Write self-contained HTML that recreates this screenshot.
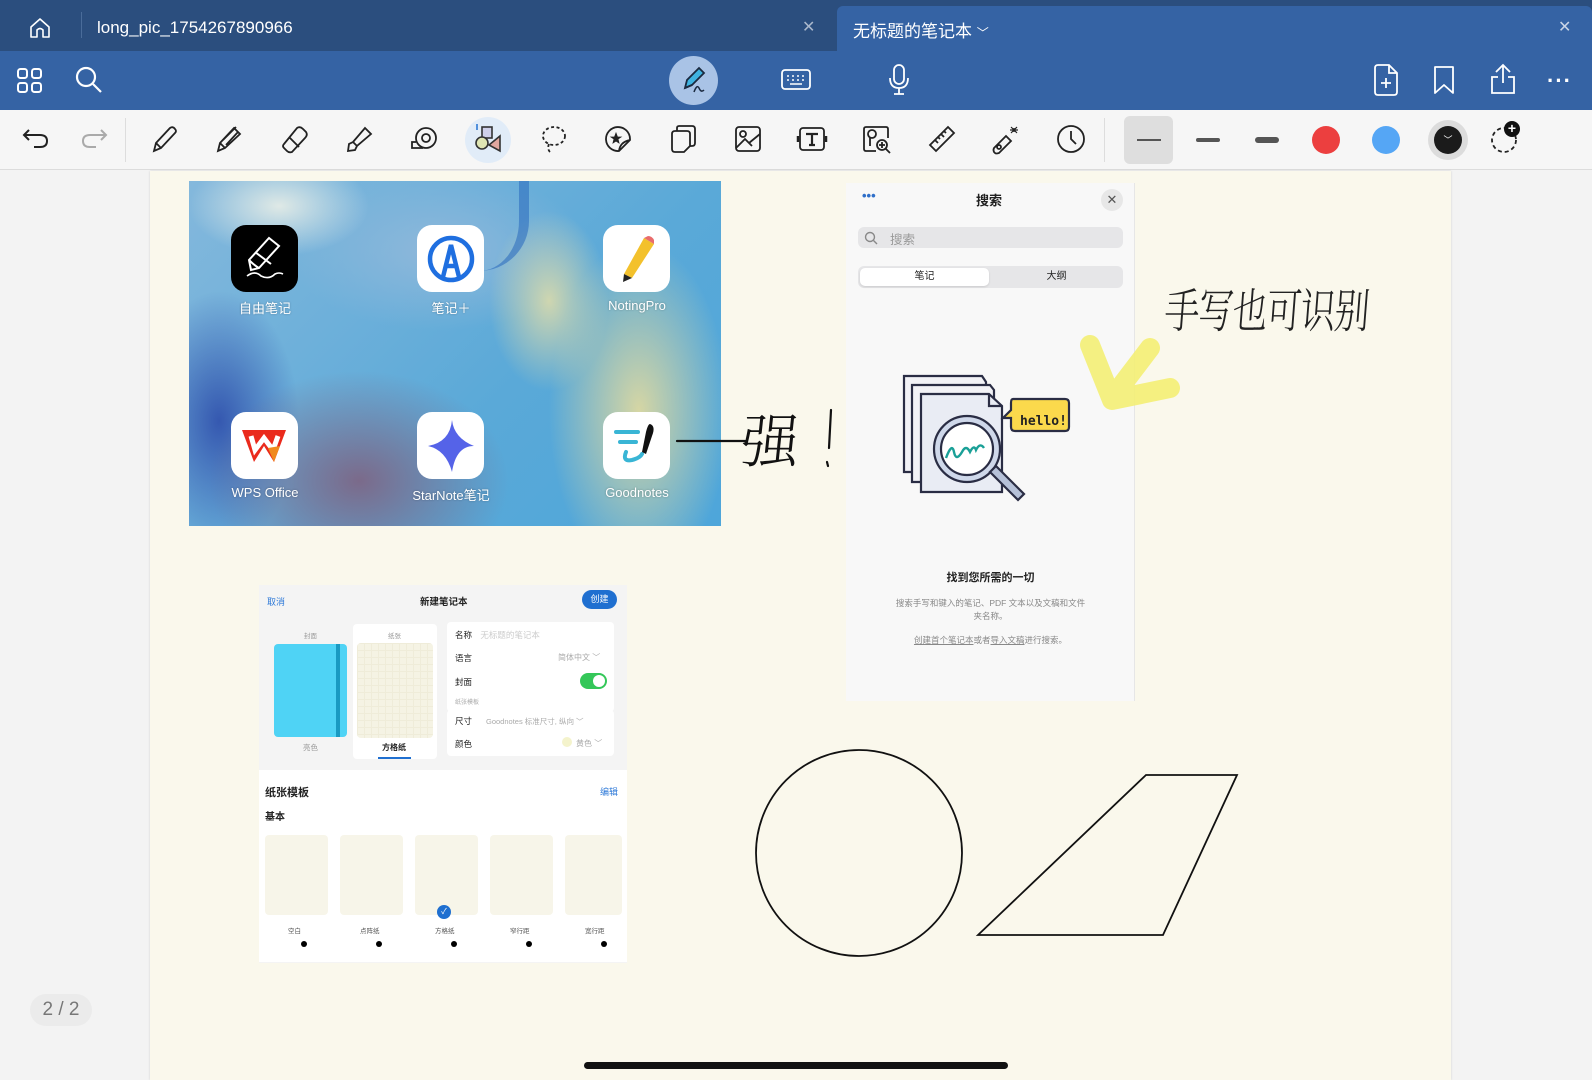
<!DOCTYPE html>
<html><head><meta charset="utf-8">
<style>
*{margin:0;padding:0;box-sizing:border-box}
body{width:1592px;height:1080px;overflow:hidden;background:#f3f3f3;font-family:"Liberation Sans","Noto Sans CJK SC",sans-serif;position:relative}
.a{position:absolute}
svg{overflow:visible}
.tb{position:absolute;top:124px;width:30px;height:30px}
.lbl{position:absolute;color:#fff;font-size:13px;text-align:center;width:110px;text-shadow:0 0 2px rgba(0,0,0,.3)}
.app{position:absolute;width:67px;height:67px;border-radius:15px;background:#fff}
</style></head><body>
<!-- tab bar -->
<div class="a" style="left:0;top:0;width:1592px;height:51px;background:#2b4e7e"></div>
<div class="a" style="left:837px;top:6px;width:755px;height:45px;background:#3563a4;border-radius:6px 6px 0 0"></div>
<svg class="a" style="left:28px;top:16px" width="24" height="24" viewBox="0 0 24 24" fill="none" stroke="#fff" stroke-width="1.6"><path d="M3 11 L12 3 L21 11 V21 H15 V14 Q12 11 9 14 V21 H3 Z" stroke-linejoin="round"/></svg>
<div class="a" style="left:81px;top:12px;width:1px;height:26px;background:#4a6c9a"></div>
<div class="a" style="left:97px;top:18px;color:#fff;font-size:17px">long_pic_1754267890966</div>
<div class="a" style="left:802px;top:17px;color:#aab8cc;font-size:16px">✕</div>
<div class="a" style="left:853px;top:17px;color:#fff;font-size:17px">无标题的笔记本 <span style="font-size:12px">﹀</span></div>
<div class="a" style="left:1558px;top:17px;color:#c8d4e6;font-size:16px">✕</div>
<!-- nav bar -->
<div class="a" style="left:0;top:51px;width:1592px;height:59px;background:#3563a4"></div>
<svg class="a" style="left:17px;top:68px" width="26" height="26" viewBox="0 0 26 26" fill="none" stroke="#fff" stroke-width="2"><rect x="1" y="1" width="9" height="9" rx="2.5"/><rect x="15" y="1" width="9" height="9" rx="2.5"/><rect x="1" y="15" width="9" height="9" rx="2.5"/><rect x="15" y="15" width="9" height="9" rx="2.5"/></svg>
<svg class="a" style="left:75px;top:66px" width="28" height="28" viewBox="0 0 28 28" fill="none" stroke="#fff" stroke-width="2.2"><circle cx="11" cy="11" r="9"/><path d="M18 18 L26 26"/></svg>
<div class="a" style="left:669px;top:56px;width:49px;height:49px;border-radius:50%;background:#a9c3e6"></div>
<svg class="a" style="left:679px;top:66px" width="30" height="30" viewBox="0 0 30 30" fill="none" stroke="#1b2a40" stroke-width="1.8"><path d="M6 22 L8 14 L20 2 L25 7 L13 19 Z" fill="#3fb3e0"/><path d="M6 22 L13 19"/><path d="M15 26 Q18 18 20 22 Q22 27 25 24" stroke-width="1.5"/></svg>
<svg class="a" style="left:781px;top:67px" width="30" height="26" viewBox="0 0 30 26" fill="none" stroke="#fff" stroke-width="1.8"><rect x="1" y="3" width="28" height="19" rx="3"/><path d="M6 9h2M11 9h2M16 9h2M21 9h2M6 13h2M11 13h2M16 13h2M21 13h2M9 17h12" stroke-width="1.6"/></svg>
<svg class="a" style="left:887px;top:64px" width="24" height="32" viewBox="0 0 24 32" fill="none" stroke="#fff" stroke-width="1.8"><rect x="7" y="1" width="10" height="19" rx="5"/><path d="M3 14 Q3 24 12 24 Q21 24 21 14 M12 24 V30 M7 30 H17"/></svg>
<svg class="a" style="left:1372px;top:64px" width="28" height="32" viewBox="0 0 28 32" fill="none" stroke="#fff" stroke-width="1.8"><path d="M3 4 Q3 1 6 1 H17 L25 9 V28 Q25 31 22 31 H6 Q3 31 3 28 Z M17 1 V9 H25"/><path d="M14 14 V24 M9 19 H19"/></svg>
<svg class="a" style="left:1433px;top:65px" width="22" height="30" viewBox="0 0 22 30" fill="none" stroke="#fff" stroke-width="1.8"><path d="M2 2 H20 V28 L11 20 L2 28 Z" stroke-linejoin="round"/></svg>
<svg class="a" style="left:1489px;top:63px" width="28" height="32" viewBox="0 0 28 32" fill="none" stroke="#fff" stroke-width="1.8"><path d="M14 2 V20 M7 9 L14 2 L21 9 M9 14 H3 V30 H25 V14 H19"/></svg>
<div class="a" style="left:1547px;top:68px;color:#fff;font-size:22px;letter-spacing:1px;font-weight:bold">···</div>
<!-- toolbar -->
<div class="a" style="left:0;top:110px;width:1592px;height:60px;background:#f6f6f6;border-bottom:1px solid #dcdcdc"></div>
<div class="a" style="left:125px;top:118px;width:1px;height:44px;background:#ddd"></div>
<div class="a" style="left:1104px;top:118px;width:1px;height:44px;background:#ddd"></div>
<svg class="tb" style="left:21px" viewBox="0 0 30 30" fill="none" stroke="#222" stroke-width="2"><path d="M8 6 L3 11 L8 16 M3 11 H19 Q26 11 26 17 Q26 23 19 23 H13"/></svg>
<svg class="tb" style="left:79px" viewBox="0 0 30 30" fill="none" stroke="#aaa" stroke-width="2"><path d="M22 6 L27 11 L22 16 M27 11 H11 Q4 11 4 17 Q4 23 11 23 H17"/></svg>
<svg class="tb" style="left:150px" viewBox="0 0 30 30" fill="none" stroke="#222" stroke-width="1.8"><path d="M4 27 L6 19 L20 4 Q23 2 25 5 Q27 7 25 9 L11 24 Z M6 19 L11 24"/></svg>
<svg class="tb" style="left:214px" viewBox="0 0 30 30" fill="none" stroke="#222" stroke-width="1.8"><path d="M4 27 L6 19 L20 4 L26 10 L11 24 Z M6 19 L11 24 M9 16 L22 3 M12 21 L24 8"/></svg>
<svg class="tb" style="left:279px" viewBox="0 0 30 30" fill="none" stroke="#222" stroke-width="1.8"><path d="M5 20 L18 4 Q21 2 24 5 L27 8 Q29 11 26 14 L13 28 Q10 29 8 27 L5 24 Q3 22 5 20 Z M11 14 L20 23"/></svg>
<svg class="tb" style="left:344px" viewBox="0 0 30 30" fill="none" stroke="#222" stroke-width="1.8"><path d="M4 27 L5 20 L9 18 L21 4 L27 10 L13 22 L11 26 Z M9 18 L13 22"/></svg>
<svg class="tb" style="left:409px" viewBox="0 0 30 30" fill="none" stroke="#222" stroke-width="1.8"><circle cx="17" cy="14" r="10"/><circle cx="17" cy="14" r="4"/><path d="M7 18 H3 V24 H14"/></svg>
<div class="a" style="left:465px;top:117px;width:46px;height:46px;border-radius:50%;background:#e1ecf8"></div>
<svg class="tb" style="left:473px" viewBox="0 0 30 30" fill="none" stroke="#333" stroke-width="1.6"><rect x="9" y="3" width="10" height="11" fill="#cfd0ea"/><circle cx="9" cy="19" r="6" fill="#dfe6b4"/><path d="M27 12 L27 27 L16 21 Z" fill="#e0a7a0"/><path d="M4 0 L4 6" stroke="#2d7ad6"/></svg>
<svg class="tb" style="left:539px" viewBox="0 0 30 30" fill="none" stroke="#222" stroke-width="1.8" stroke-dasharray="3 2.5"><ellipse cx="15" cy="12" rx="11" ry="9"/><path d="M10 20 Q8 25 11 28"/></svg>
<svg class="tb" style="left:603px" viewBox="0 0 30 30" fill="none" stroke="#222" stroke-width="1.8"><path d="M27 15 A12 12 0 1 0 16 27 L27 16 Z M16 27 Q17 18 27 16"/><path d="M13 9 L14.5 13 L18 13 L15 15 L16 19 L13 17 L10 19 L11 15 L8 13 L11.5 13 Z" fill="#222" stroke-width="0.8"/></svg>
<svg class="tb" style="left:668px" viewBox="0 0 30 30" fill="none" stroke="#222" stroke-width="1.8"><path d="M9 7 V4 Q9 2 11 2 H24 Q27 2 27 5 V19 Q27 22 24 22 H22"/><path d="M4 10 Q4 7 7 7 H19 Q22 7 22 10 V22 L16 28 H7 Q4 28 4 25 Z"/></svg>
<svg class="tb" style="left:733px" viewBox="0 0 30 30" fill="none" stroke="#222" stroke-width="1.8"><rect x="3" y="3" width="24" height="24" rx="3"/><circle cx="10" cy="10" r="3"/><path d="M3 24 L12 15 L19 22 M16 19 L27 10"/></svg>
<svg class="tb" style="left:797px" viewBox="0 0 30 30" fill="none" stroke="#222" stroke-width="1.8"><rect x="3" y="4" width="24" height="22" rx="3"/><path d="M9 10 H21 M15 10 V21 M12 21 H18" stroke-width="2.2"/><path d="M1 12 V18 M29 12 V18" stroke-width="2.5"/></svg>
<svg class="tb" style="left:862px" viewBox="0 0 30 30" fill="none" stroke="#222" stroke-width="1.8"><path d="M14 27 H4 Q2 27 2 25 V5 Q2 3 4 3 H24 Q26 3 26 5 V14"/><circle cx="10" cy="10" r="4"/><path d="M8 14 L8 22"/><circle cx="20" cy="21" r="5"/><path d="M24 25 L28 29 M20 18 V24 M17 21 H23"/></svg>
<svg class="tb" style="left:927px" viewBox="0 0 30 30" fill="none" stroke="#222" stroke-width="1.8"><path d="M3 21 L21 3 L27 9 L9 27 Z M8 16 L11 19 M11 13 L13 15 M14 10 L17 13 M17 7 L19 9"/></svg>
<svg class="tb" style="left:991px" viewBox="0 0 30 30" fill="none" stroke="#222" stroke-width="1.8"><path d="M3 24 L15 12 L20 17 L8 29 Q5 30 4 29 L3 28 Q2 26 3 24 Z"/><circle cx="8" cy="23" r="2"/><path d="M23 4 V8 M19 6 H27 M20 3 L26 9 M26 3 L20 9" stroke-width="1.2"/></svg>
<svg class="tb" style="left:1056px" viewBox="0 0 30 30" fill="none" stroke="#222" stroke-width="1.8"><circle cx="15" cy="15" r="13"/><path d="M15 7 V15 L20 20"/></svg>
<div class="a" style="left:1124px;top:116px;width:49px;height:48px;border-radius:6px;background:#dedede"></div>
<div class="a" style="left:1137px;top:139px;width:24px;height:1.5px;background:#555"></div>
<div class="a" style="left:1196px;top:138px;width:24px;height:3.5px;background:#555;border-radius:2px"></div>
<div class="a" style="left:1255px;top:137px;width:24px;height:5.5px;background:#555;border-radius:3px"></div>
<div class="a" style="left:1312px;top:126px;width:28px;height:28px;border-radius:50%;background:#ec3f3f"></div>
<div class="a" style="left:1372px;top:126px;width:28px;height:28px;border-radius:50%;background:#55a6f5"></div>
<div class="a" style="left:1428px;top:120px;width:40px;height:40px;border-radius:50%;background:#dcdcdc"></div>
<div class="a" style="left:1434px;top:126px;width:28px;height:28px;border-radius:50%;background:#1b1b1b;color:#fff;font-size:9px;text-align:center;line-height:28px">﹀</div>
<svg class="tb" style="left:1489px" viewBox="0 0 30 30" fill="none" stroke="#222" stroke-width="1.8" stroke-dasharray="4 3"><circle cx="15" cy="16" r="12"/></svg>
<div class="a" style="left:1504px;top:121px;width:16px;height:16px;border-radius:50%;background:#111;color:#fff;font-size:14px;line-height:15px;text-align:center;font-weight:bold">+</div>
<!-- page -->
<div class="a" style="left:150px;top:171px;width:1301px;height:909px;background:#faf8ec;box-shadow:0 0 2px rgba(0,0,0,.15)"></div>
<div class="a" style="left:30px;top:994px;width:62px;height:32px;border-radius:16px;background:#ebebeb;color:#777;font-size:19px;text-align:center;line-height:32px">2 / 2</div>
<div class="a" style="left:584px;top:1062px;width:424px;height:7px;border-radius:4px;background:#111"></div>
<!-- photo -->
<div class="a" style="left:189px;top:181px;width:532px;height:345px;overflow:hidden;background:
radial-gradient(ellipse 90px 50px at 90px 25px,#dfe9e6 0%,rgba(223,233,230,0) 100%),
radial-gradient(ellipse 90px 170px at 450px 230px,#d6d6a4 0%,rgba(214,214,164,0) 100%),
radial-gradient(ellipse 60px 90px at 360px 120px,#cfd6b0 0%,rgba(207,214,176,0) 100%),
radial-gradient(ellipse 150px 80px at 250px 70px,#8fb8da 0%,rgba(143,184,218,0) 100%),
radial-gradient(ellipse 150px 110px at 170px 300px,#7b6a8a 0%,rgba(123,106,138,0) 100%),
radial-gradient(ellipse 80px 130px at 30px 240px,#3558b0 0%,rgba(53,88,176,0) 100%),
linear-gradient(135deg,#84b8dc,#5aa9d8 60%,#4ea6da)">
<div class="a" style="left:290px;top:-10px;width:50px;height:100px;border-radius:0 0 50px 0;border-right:10px solid #2f6fc0;opacity:.6"></div>
</div>
<div class="app" style="left:231px;top:225px;background:#000"></div>
<svg class="a" style="left:241px;top:232px" width="48" height="52" viewBox="0 0 48 52" fill="none" stroke="#fff" stroke-width="2"><path d="M10 38 L8 28 L28 6 L38 14 L18 36 Z M14 20 L30 32 M8 28 Q14 34 18 36"/><path d="M6 44 Q14 38 20 44 Q28 48 34 42 Q38 40 42 42" stroke-width="1.6"/></svg>
<div class="app" style="left:417px;top:225px"></div>
<svg class="a" style="left:425px;top:233px" width="52" height="52" viewBox="0 0 52 52" fill="none" stroke="#1f6fe0" stroke-width="4.5"><circle cx="26" cy="26" r="21"/><path d="M18 44 L26 12 L34 44 M21 33 H31"/></svg>
<div class="app" style="left:603px;top:225px"></div>
<svg class="a" style="left:610px;top:232px" width="54" height="54" viewBox="0 0 54 54"><path d="M34 6 L44 12 L22 46 L14 42 Z" fill="#f3c12c"/><path d="M34 6 L38 4 Q42 4 44 8 L44 12 Z" fill="#e96c6c"/><path d="M14 42 L22 46 L13 50 Z" fill="#222"/></svg>
<div class="app" style="left:231px;top:412px"></div>
<svg class="a" style="left:238px;top:420px" width="54" height="52" viewBox="0 0 54 52"><path d="M4 10 H48 L36 42 L26 26 L16 42 Z" fill="#ea2a1c"/><path d="M13 16 L17 30 L26 18 L35 30 L40 16" fill="none" stroke="#fff" stroke-width="5"/><path d="M30 28 L36 42 L42 26" fill="#f08a1e"/></svg>
<div class="app" style="left:417px;top:412px"></div>
<svg class="a" style="left:422px;top:416px" width="58" height="58" viewBox="0 0 58 58"><path d="M30 4 Q32 22 52 30 Q34 30 30 56 Q24 34 6 30 Q28 26 30 4 Z" fill="#5563e8"/></svg>
<div class="app" style="left:603px;top:412px"></div>
<svg class="a" style="left:610px;top:420px" width="54" height="52" viewBox="0 0 54 52" fill="none"><path d="M6 12 H28 M10 22 H26 M16 32 Q12 42 22 40 Q30 38 32 34" stroke="#39b5d5" stroke-width="4" stroke-linecap="round"/><path d="M40 4 Q46 6 42 16 L36 34 L32 32 L36 12 Q38 4 40 4 Z" fill="#111"/></svg>
<div class="lbl" style="left:210px;top:298px">自由笔记</div>
<div class="lbl" style="left:396px;top:298px">笔记＋</div>
<div class="lbl" style="left:582px;top:298px">NotingPro</div>
<div class="lbl" style="left:210px;top:485px">WPS Office</div>
<div class="lbl" style="left:396px;top:485px">StarNote笔记</div>
<div class="lbl" style="left:582px;top:485px">Goodnotes</div>
<!-- handwriting 强 -->
<svg class="a" style="left:675px;top:400px" width="170" height="80" viewBox="0 0 170 80" fill="none" stroke="#111" stroke-width="2.2" stroke-linecap="round"><path d="M2 41 H70"/><path d="M156 10 L154 48 M152 62 L153 66"/></svg>
<div class="a" style="left:742px;top:402px;font-family:'Noto Serif CJK SC',serif;font-weight:300;font-size:58px;line-height:70px;color:#111;transform:skewX(-6deg)">强</div>
<!-- search panel -->
<div class="a" style="left:846px;top:183px;width:289px;height:518px;background:#f8f8f8;border-right:1px solid #e6e6e6"></div>
<div class="a" style="left:862px;top:188px;color:#2f6fc9;font-size:13px;font-weight:bold">•••</div>
<div class="a" style="left:976px;top:190px;font-size:13px;font-weight:bold;color:#222">搜索</div>
<div class="a" style="left:1101px;top:189px;width:22px;height:22px;border-radius:50%;background:#e7e7e7;color:#555;font-size:13px;text-align:center;line-height:22px">✕</div>
<div class="a" style="left:858px;top:227px;width:265px;height:21px;border-radius:6px;background:#e6e6e8"></div>
<svg class="a" style="left:864px;top:231px" width="14" height="14" viewBox="0 0 14 14" fill="none" stroke="#888" stroke-width="1.4"><circle cx="6" cy="6" r="4.5"/><path d="M9.5 9.5 L13 13"/></svg>
<div class="a" style="left:890px;top:229px;font-size:12.5px;color:#999">搜索</div>
<div class="a" style="left:858px;top:266px;width:265px;height:22px;border-radius:6px;background:#e6e6e8"></div>
<div class="a" style="left:860px;top:268px;width:129px;height:18px;border-radius:5px;background:#fff;box-shadow:0 1px 2px rgba(0,0,0,.12);font-size:10px;text-align:center;line-height:18px;color:#222">笔记</div>
<div class="a" style="left:992px;top:268px;width:129px;height:18px;font-size:10px;text-align:center;line-height:18px;color:#222">大纲</div>
<svg class="a" style="left:900px;top:372px" width="180" height="160" viewBox="0 0 180 160" fill="none" stroke="#2a2d44" stroke-width="2.2"><path d="M4 4 H82 L86 10 V100 H4 Z" fill="#f2f2f6"/><path d="M12 13 H90 L94 18 V110 H12 Z" fill="#f2f2f6"/><path d="M21 22 H89 L102 34 V120 H21 Z" fill="#e9ecf4"/><path d="M89 22 V34 H102"/><circle cx="67" cy="77" r="33" fill="#cfd8ea"/><circle cx="67" cy="77" r="26" fill="#fff"/><path d="M90 100 L118 128 L124 122 L96 94 Z" fill="#b6c1d8"/><path d="M46 86 Q52 70 54 80 Q56 90 62 80 Q66 72 70 80 Q74 72 76 78 Q80 70 84 76" stroke="#1aa097" stroke-width="2.4"/><path d="M113 27 H165 Q169 27 169 31 V55 Q169 59 165 59 H115 Q111 59 111 55 V46 L103 46 L111 38 V31 Q111 27 113 27 Z" fill="#fbd94c"/></svg>
<div class="a" style="left:1020px;top:414px;font-family:'DejaVu Sans Mono',monospace;font-weight:bold;font-size:13px;color:#222">hello!</div>
<div class="a" style="left:846px;top:569px;width:289px;text-align:center;font-size:11px;font-weight:bold;color:#222">找到您所需的一切</div>
<div class="a" style="left:893px;top:597px;width:195px;text-align:center;font-size:8.5px;color:#888;line-height:13px">搜索手写和键入的笔记、PDF 文本以及文稿和文件夹名称。</div>
<div class="a" style="left:846px;top:634px;width:289px;text-align:center;font-size:8.5px;color:#888"><u>创建首个笔记本</u>或者<u>导入文稿</u>进行搜索。</div>
<!-- yellow arrow -->
<svg class="a" style="left:1080px;top:330px" width="110" height="90" viewBox="0 0 110 90" fill="none" stroke="#f3ee6d" stroke-opacity=".85" stroke-width="20" stroke-linecap="round" stroke-linejoin="round"><path d="M10 15 L32 70 L90 58 M32 68 L70 18"/></svg>
<!-- handwriting 手写也可识别 -->
<div class="a" style="left:1168px;top:268px;font-family:'Noto Serif CJK SC',serif;font-size:35px;line-height:60px;color:#222;letter-spacing:-1px;transform:scaleY(1.35) skewX(-6deg);transform-origin:left top;font-weight:300">手写也可识别</div>
<!-- dialog -->
<div class="a" style="left:259px;top:585px;width:368px;height:378px;background:#f4f4f4"></div>
<div class="a" style="left:267px;top:595px;font-size:9px;color:#2f7ad8">取消</div>
<div class="a" style="left:420px;top:594px;font-size:9.5px;font-weight:bold;color:#222">新建笔记本</div>
<div class="a" style="left:582px;top:590px;width:35px;height:19px;border-radius:10px;background:#1f6fd0;color:#fff;font-size:9px;text-align:center;line-height:19px">创建</div>
<div class="a" style="left:304px;top:630px;font-size:6.5px;color:#999">封面</div>
<div class="a" style="left:274px;top:644px;width:73px;height:93px;border-radius:4px;background:#4fd3f5"></div>
<div class="a" style="left:336px;top:644px;width:4px;height:93px;background:#1a9ac2"></div>
<div class="a" style="left:303px;top:742px;font-size:7.5px;color:#999">亮色</div>
<div class="a" style="left:353px;top:624px;width:84px;height:135px;background:#fff;border-radius:4px"></div>
<div class="a" style="left:388px;top:630px;font-size:6.5px;color:#999">纸张</div>
<div class="a" style="left:357px;top:643px;width:76px;height:95px;border-radius:4px;background:#f5f3e4;background-image:linear-gradient(#efecd9 1px,transparent 1px),linear-gradient(90deg,#efecd9 1px,transparent 1px);background-size:7px 7px"></div>
<div class="a" style="left:382px;top:742px;font-size:8px;font-weight:bold;color:#222">方格纸</div>
<div class="a" style="left:378px;top:757px;width:33px;height:2px;background:#1f6fd0"></div>
<div class="a" style="left:447px;top:622px;width:167px;height:90px;background:#fff;border-radius:4px"></div>
<div class="a" style="left:455px;top:629px;font-size:8.5px;color:#222">名称 <span style="color:#ccc;margin-left:6px">无标题的笔记本</span></div>
<div class="a" style="left:455px;top:652px;font-size:8.5px;color:#222">语言</div>
<div class="a" style="left:558px;top:652px;font-size:8px;color:#aaa">简体中文 ﹀</div>
<div class="a" style="left:455px;top:676px;font-size:8.5px;color:#222">封面</div>
<div class="a" style="left:580px;top:673px;width:27px;height:16px;border-radius:8px;background:#34c759"></div>
<div class="a" style="left:593px;top:675px;width:12px;height:12px;border-radius:50%;background:#fff"></div>
<div class="a" style="left:455px;top:697px;font-size:6px;color:#aaa">纸张模板</div>
<div class="a" style="left:447px;top:710px;width:167px;height:46px;background:#fff;border-radius:4px"></div>
<div class="a" style="left:455px;top:715px;font-size:8.5px;color:#222">尺寸</div>
<div class="a" style="left:486px;top:716px;font-size:7.5px;color:#aaa">Goodnotes 标准尺寸, 纵向 ﹀</div>
<div class="a" style="left:455px;top:738px;font-size:8.5px;color:#222">颜色</div>
<div class="a" style="left:562px;top:737px;width:10px;height:10px;border-radius:50%;background:#f4f3cc"></div>
<div class="a" style="left:576px;top:738px;font-size:8px;color:#aaa">黄色 ﹀</div>
<div class="a" style="left:259px;top:770px;width:368px;height:192px;background:#fff"></div>
<div class="a" style="left:265px;top:784px;font-size:11px;font-weight:bold;color:#222">纸张模板</div>
<div class="a" style="left:600px;top:785px;font-size:9px;color:#2f7ad8">编辑</div>
<div class="a" style="left:265px;top:808px;font-size:10px;font-weight:bold;color:#222">基本</div>
<div class="a" style="left:265px;top:835px;width:63px;height:80px;border-radius:4px;background:#f7f5e9"></div>
<div class="a" style="left:340px;top:835px;width:63px;height:80px;border-radius:4px;background:#f7f5e9"></div>
<div class="a" style="left:415px;top:835px;width:63px;height:80px;border-radius:4px;background:#f7f5e9"></div>
<div class="a" style="left:490px;top:835px;width:63px;height:80px;border-radius:4px;background:#f7f5e9"></div>
<div class="a" style="left:565px;top:835px;width:57px;height:80px;border-radius:4px;background:#f7f5e9"></div>
<div class="a" style="left:437px;top:905px;width:14px;height:14px;border-radius:50%;background:#1f6fd0;color:#fff;font-size:8px;text-align:center;line-height:14px">✓</div>
<div class="a" style="left:288px;top:925px;font-size:6.5px;color:#555">空白</div>
<div class="a" style="left:360px;top:925px;font-size:6.5px;color:#555">点阵纸</div>
<div class="a" style="left:435px;top:925px;font-size:6.5px;color:#555">方格纸</div>
<div class="a" style="left:510px;top:925px;font-size:6.5px;color:#555">窄行距</div>
<div class="a" style="left:585px;top:925px;font-size:6.5px;color:#555">宽行距</div>
<div class="a" style="left:301px;top:941px;width:6px;height:6px;border-radius:50%;background:#000"></div>
<div class="a" style="left:376px;top:941px;width:6px;height:6px;border-radius:50%;background:#000"></div>
<div class="a" style="left:451px;top:941px;width:6px;height:6px;border-radius:50%;background:#000"></div>
<div class="a" style="left:526px;top:941px;width:6px;height:6px;border-radius:50%;background:#000"></div>
<div class="a" style="left:601px;top:941px;width:6px;height:6px;border-radius:50%;background:#000"></div>
<!-- shapes -->
<svg class="a" style="left:0;top:0" width="1592" height="1080" viewBox="0 0 1592 1080" fill="none" stroke="#111" stroke-width="1.8"><circle cx="859" cy="853" r="103"/><path d="M978 935 L1146 775 L1237 775 L1163 935 Z"/></svg>
</body></html>
